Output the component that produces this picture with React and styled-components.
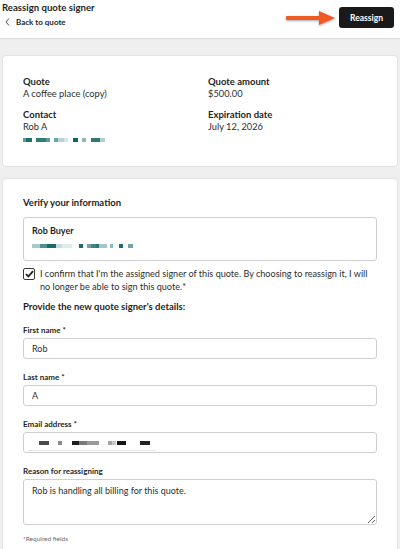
import React from 'react';
import styled, { createGlobalStyle } from 'styled-components';

const GlobalStyle = createGlobalStyle`
  html, body {
    margin: 0;
    padding: 0;
    background: #efefef;
    font-family: Lato, "Open Sans", sans-serif;
    color: #1f1f1f;
  }
  * { box-sizing: border-box; }
`;

const Page = styled.div`
  width: 400px;
  min-height: 549px;
  background: #efefef;
  overflow: hidden;
`;

const Header = styled.header`
  height: 39px;
  background: #fff;
  border-bottom: 1px solid #dcdcdc;
  display: flex;
  justify-content: space-between;
  align-items: flex-start;
  padding: 2px 6px 0 2px;
`;

const TitleBlock = styled.div`
  display: flex;
  flex-direction: column;
  gap: 2px;
`;

const Title = styled.h1`
  margin: 0;
  font-size: 9.6px;
  line-height: 12px;
  font-weight: 700;
  color: #1f1f1f;
`;

const BackLink = styled.a`
  display: flex;
  align-items: center;
  gap: 6px;
  padding-left: 3px;
  font-size: 8px;
  line-height: 12px;
  font-weight: 700;
  color: #1f1f1f;
  text-decoration: none;
`;

const Actions = styled.div`
  display: flex;
  align-items: center;
  gap: 2px;
  margin-top: 5px;
`;

const PrimaryButton = styled.button`
  width: 55px;
  height: 21px;
  border: none;
  border-radius: 3px;
  background: #1a1a1a;
  color: #fff;
  font-family: Lato, sans-serif;
  font-size: 8.5px;
  font-weight: 700;
  padding: 0;
  cursor: pointer;
`;

const Main = styled.main`
  display: flex;
  flex-direction: column;
  gap: 11px;
  padding: 16px 2px 0 2px;
`;

const Card = styled.section`
  background: #fff;
  border: 1px solid #e2e2e2;
  border-radius: 4px;
  padding: ${({ $pad }) => $pad};
  min-height: ${({ $h }) => $h || 'auto'};
`;

const SummaryGrid = styled.div`
  display: grid;
  grid-template-columns: 185px 1fr;
  row-gap: 9px;
`;

const Field = styled.div`
  display: flex;
  flex-direction: column;
`;

const SummaryLabel = styled.div`
  font-size: 9.5px;
  line-height: 12px;
  font-weight: 700;
  color: #1f1f1f;
`;

const SummaryValue = styled.div`
  font-size: 9.3px;
  line-height: 12px;
  color: #2e2e2e;
`;

const Redacted = styled.div`
  display: flex;
  height: 4px;
  margin-top: ${({ $mt }) => $mt || 0}px;
`;

const Pixel = styled.span`
  display: block;
  width: ${({ $w }) => $w}px;
  height: 100%;
  background: ${({ $c }) => $c};
`;

const SectionTitle = styled.h2`
  margin: 0;
  font-size: 9.5px;
  line-height: 14px;
  font-weight: 700;
  color: #1f1f1f;
`;

const InfoBox = styled.div`
  margin-top: 7px;
  border: 1px solid #cfcfcf;
  border-radius: 3px;
  padding: 6px 8px 12px 8px;
`;

const InfoName = styled.div`
  font-size: 9px;
  line-height: 14px;
  font-weight: 700;
  margin-bottom: 6px;
`;

const ConfirmRow = styled.label`
  display: flex;
  gap: 5px;
  margin-top: 6px;
  font-size: 9.1px;
  line-height: 13px;
  color: #2e2e2e;
`;

const CheckBox = styled.span`
  flex: none;
  width: 12px;
  height: 12px;
  margin-top: 1px;
  border: 1px solid #3a3a3a;
  border-radius: 2px;
  display: flex;
  align-items: center;
  justify-content: center;
  background: #fff;
`;

const DetailsTitle = styled(SectionTitle)`
  margin-top: 7px;
`;

const FormField = styled.div`
  display: flex;
  flex-direction: column;
  gap: 2px;
  margin-top: ${({ $mt }) => $mt}px;
`;

const FieldLabel = styled.label`
  font-size: 8px;
  line-height: 12px;
  font-weight: 700;
  color: #1f1f1f;
`;

const TextInput = styled.input`
  height: 21px;
  width: 100%;
  border: 1px solid #cfcfcf;
  border-radius: 3px;
  padding: 0 8px;
  font-family: Lato, sans-serif;
  font-size: 9px;
  color: #2e2e2e;
  background: #fff;
  outline: none;
`;

const FakeInput = styled.div`
  position: relative;
  height: 21px;
  border: 1px solid #cfcfcf;
  border-radius: 3px;
  padding: 0 0 0 15px;
  display: flex;
  align-items: center;
`;

const Underline = styled.span`
  position: absolute;
  left: 4px;
  width: 128px;
  bottom: 1px;
  height: 1px;
  background: #e6e6e6;
`;

const TextArea = styled.textarea`
  height: 46px;
  width: 100%;
  border: 1px solid #cfcfcf;
  border-radius: 3px;
  padding: 5px 8px;
  font-family: Lato, sans-serif;
  font-size: 9px;
  line-height: 12px;
  color: #2e2e2e;
  resize: vertical;
  outline: none;
`;

const Footnote = styled.div`
  margin-top: 9px;
  font-size: 6.5px;
  line-height: 10px;
  color: #6b6b6b;
`;

const contactPixels = [
  [3, '#5a9a9a'], [6, '#1f6f6f'], [4, 'transparent'], [10, '#2f7c7c'], [4, '#5f9a9a'],
  [4, 'transparent'], [4, '#6aa5a5'], [6, '#b7d3d3'], [4, '#d5e5e5'], [5, 'transparent'],
  [5, '#0f6565'], [4, 'transparent'], [4, '#8ab9b9'], [5, 'transparent'], [9, '#2c7a7a'],
  [5, '#b0cfcf'],
];

const buyerPixels = [
  [8, '#a9c9c9'], [7, '#4f9090'], [9, '#1d6b6b'], [6, '#c7dddd'], [10, '#e0ecec'],
  [7, 'transparent'], [4, '#1d6b6b'], [4, 'transparent'], [4, '#6fa5a5'], [5, '#3f8585'],
  [3, '#2a7777'], [8, '#a7c7c7'], [3, 'transparent'], [3, '#8fbbbb'], [6, 'transparent'],
  [4, '#1d6b6b'], [5, 'transparent'], [5, '#6fa5a5'],
];

const emailPixels = [
  [10, '#4a4a4a'], [9, 'transparent'], [4, '#8a8a8a'], [10, 'transparent'], [7, '#1e1e1e'],
  [8, '#7a7a7a'], [12, '#9a9a9a'], [9, 'transparent'], [4, '#a5a5a5'], [4, '#c8c8c8'],
  [1, 'transparent'], [9, '#151515'], [14, 'transparent'], [10, '#222'],
];

const PixelRow = ({ cells, mt }) => (
  <Redacted $mt={mt}>
    {cells.map(([w, c], i) => (
      <Pixel key={i} $w={w} $c={c} />
    ))}
  </Redacted>
);

const Arrow = () => (
  <svg width="52" height="20" viewBox="0 0 52 20">
    <defs>
      <filter id="sh" x="-10%" y="-30%" width="120%" height="160%">
        <feDropShadow dx="0" dy="1" stdDeviation="0.8" floodColor="#000" floodOpacity="0.35" />
      </filter>
    </defs>
    <g filter="url(#sh)" fill="#f05a22">
      <rect x="1" y="8" width="36" height="4" rx="1" />
      <path d="M34 3 L50 10 L34 17 Z" />
    </g>
  </svg>
);

const App = () => {
  return (
    <Page>
      <GlobalStyle />
      <Header>
        <TitleBlock>
          <Title>Reassign quote signer</Title>
          <BackLink href="#">
            <svg width="5" height="8" viewBox="0 0 5 8">
              <polyline points="4,0.5 1,4 4,7.5" fill="none" stroke="#333" strokeWidth="0.9" />
            </svg>
            Back to quote
          </BackLink>
        </TitleBlock>
        <Actions>
          <Arrow />
          <PrimaryButton>Reassign</PrimaryButton>
        </Actions>
      </Header>

      <Main>
        <Card $pad="20px 20px 0 20px" $h="112px">
          <SummaryGrid>
            <Field>
              <SummaryLabel>Quote</SummaryLabel>
              <SummaryValue>A coffee place (copy)</SummaryValue>
            </Field>
            <Field>
              <SummaryLabel>Quote amount</SummaryLabel>
              <SummaryValue>$500.00</SummaryValue>
            </Field>
            <Field>
              <SummaryLabel>Contact</SummaryLabel>
              <SummaryValue>Rob A</SummaryValue>
              <PixelRow cells={contactPixels} mt={5} />
            </Field>
            <Field>
              <SummaryLabel>Expiration date</SummaryLabel>
              <SummaryValue>July 12, 2026</SummaryValue>
            </Field>
          </SummaryGrid>
        </Card>

        <Card $pad="17px 20px 20px 20px">
          <SectionTitle>Verify your information</SectionTitle>
          <InfoBox>
            <InfoName>Rob Buyer</InfoName>
            <PixelRow cells={buyerPixels} />
          </InfoBox>

          <ConfirmRow>
            <CheckBox>
              <svg width="9" height="8" viewBox="0 0 9 8">
                <polyline points="1,4.2 3.4,6.5 8,1.2" fill="none" stroke="#1f1f1f" strokeWidth="1.8" />
              </svg>
            </CheckBox>
            <span>
              I confirm that I'm the assigned signer of this quote. By choosing to reassign it, I will no longer be able to sign this quote.*
            </span>
          </ConfirmRow>

          <DetailsTitle>Provide the new quote signer's details:</DetailsTitle>

          <FormField $mt={10}>
            <FieldLabel>First name *</FieldLabel>
            <TextInput readOnly defaultValue="Rob" />
          </FormField>
          <FormField $mt={12}>
            <FieldLabel>Last name *</FieldLabel>
            <TextInput readOnly defaultValue="A" />
          </FormField>
          <FormField $mt={12}>
            <FieldLabel>Email address *</FieldLabel>
            <FakeInput>
              <PixelRow cells={emailPixels} />
              <Underline />
            </FakeInput>
          </FormField>
          <FormField $mt={12}>
            <FieldLabel>Reason for reassigning</FieldLabel>
            <TextArea readOnly defaultValue="Rob is handling all billing for this quote." />
          </FormField>
          <Footnote>*Required fields</Footnote>
        </Card>
      </Main>
    </Page>
  );
};

export default App;
